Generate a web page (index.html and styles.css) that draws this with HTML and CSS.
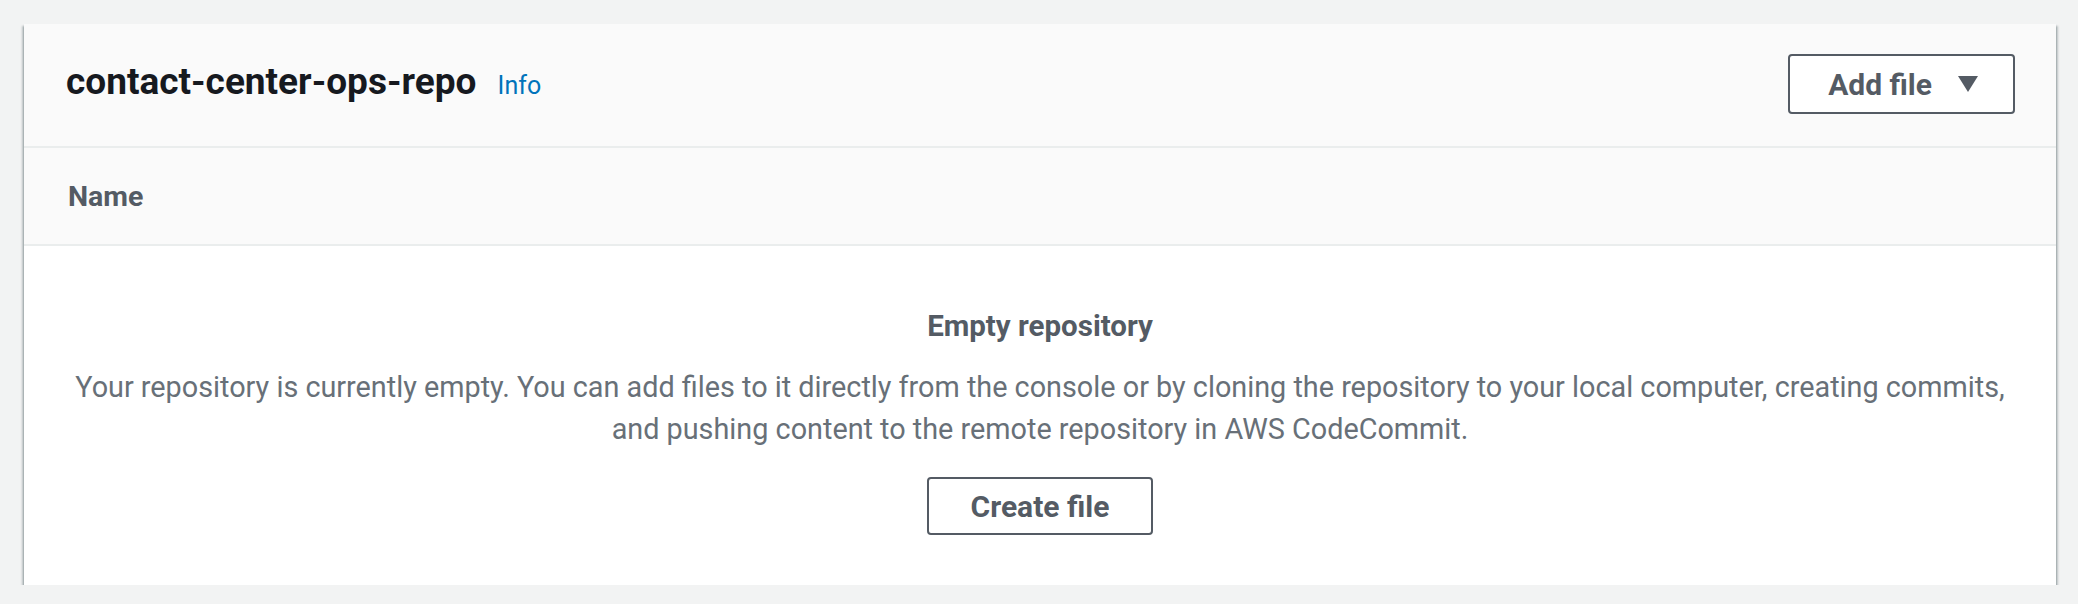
FILE: index.html
```html
<!DOCTYPE html>
<html lang="en">
<head>
    <meta charset="UTF-8">
    <meta name="viewport" content="width=device-width, initial-scale=1.0">
    <title>contact-center-ops-repo</title>
    <link rel="stylesheet" href="styles.css">
</head>
<body>
    <div class="panel">
        <div class="panel-header">
            <h2 class="panel-title">contact-center-ops-repo <a class="info-link" href="#">Info</a></h2>
            <button class="btn btn-dropdown">
                Add file
                <svg class="caret" width="20" height="16" viewBox="0 0 20 16"><path d="M0 0 H20 L10 16 Z" fill="#545b64"/></svg>
            </button>
        </div>
        <table class="files-table">
            <thead>
                <tr>
                    <th>Name</th>
                </tr>
            </thead>
            <tbody>
                <tr>
                    <td>
                        <div class="empty-state">
                            <h3>Empty repository</h3>
                            <p>Your repository is currently empty. You can add files to it directly from the console or by cloning the repository to your local computer, creating commits, and pushing content to the remote repository in AWS CodeCommit.</p>
                            <button class="btn">Create file</button>
                        </div>
                    </td>
                </tr>
            </tbody>
        </table>
    </div>
</body>
</html>
```

FILE: styles.css
```css
body {
    font-family: Roboto, "Noto Sans", sans-serif;
    margin: 0;
    padding: 24px 22px 0 24px;
    background-color: #f2f3f3;
    color: #16191f;
}

.panel {
    background-color: #fff;
    box-shadow: 0 2px 2px 0 rgba(0, 28, 36, 0.4),
                2px 2px 2px 0 rgba(0, 28, 36, 0.2),
                -2px 2px 2px 0 rgba(0, 28, 36, 0.2);
}

.panel-header {
    display: flex;
    align-items: center;
    justify-content: space-between;
    padding: 30px 41px 32px 42px;
    background-color: #fafafa;
    border-bottom: 2px solid #eaeded;
}

.panel-title {
    margin: 0;
    font-size: 37px;
    font-weight: 700;
    line-height: 48px;
    color: #16191f;
}

.info-link {
    margin-left: 12px;
    font-size: 25px;
    font-weight: 400;
    color: #0073bb;
    text-decoration: none;
}

.btn {
    display: inline-flex;
    align-items: center;
    box-sizing: border-box;
    height: 58px;
    padding: 0 42px;
    font-family: Roboto, "Noto Sans", sans-serif;
    font-size: 30px;
    font-weight: 700;
    color: #545b64;
    background-color: #fff;
    border: 2px solid #545b64;
    border-radius: 4px;
}

.btn-dropdown {
    height: 60px;
    padding: 0 35px 0 38px;
    gap: 26px;
}

.files-table {
    width: 100%;
    border-collapse: collapse;
}

.files-table th {
    height: 96px;
    padding: 0 44px;
    text-align: left;
    font-size: 28.5px;
    font-weight: 700;
    color: #545b64;
    background-color: #fafafa;
    border-bottom: 2px solid #eaeded;
}

.files-table td {
    padding: 58px 40px 50px;
}

.empty-state {
    text-align: center;
    color: #687078;
}

.empty-state h3 {
    margin: 0 0 18px;
    font-size: 29.5px;
    line-height: 44px;
    font-weight: 700;
    color: #545b64;
}

.empty-state p {
    margin: 0 0 27px;
    font-size: 28.8px;
    line-height: 42px;
}
```
